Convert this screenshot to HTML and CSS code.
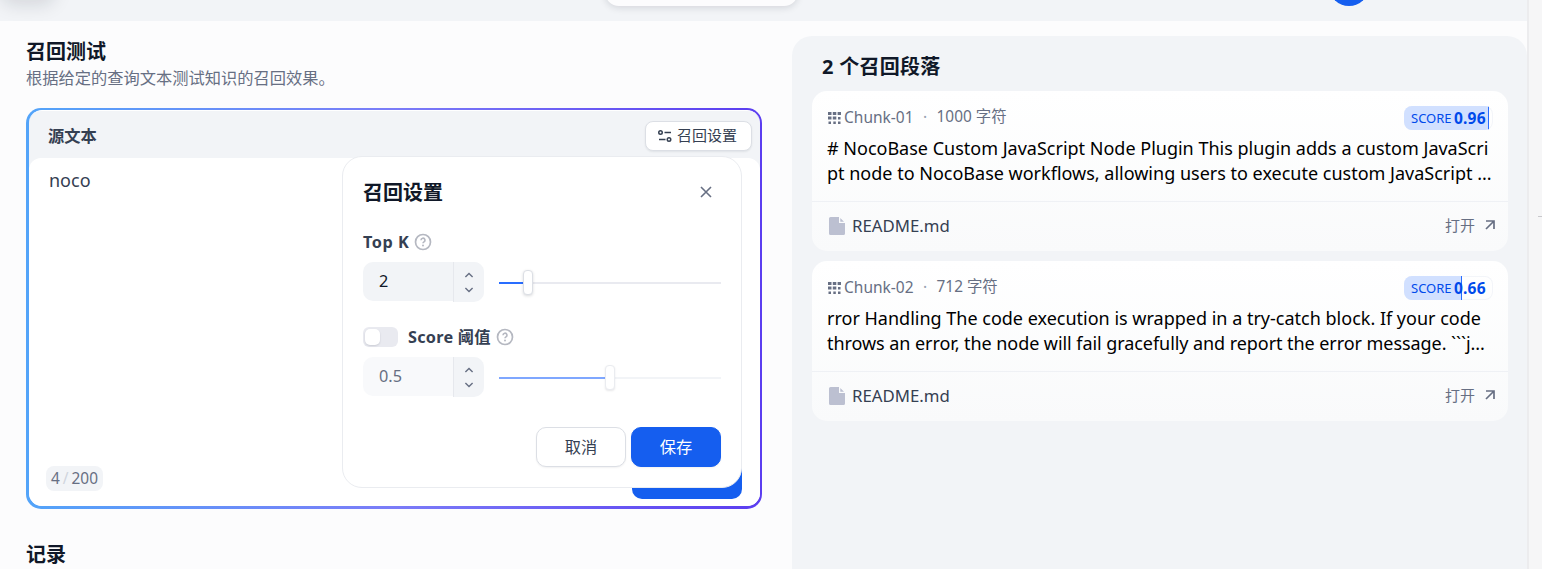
FILE: index.html
```html
<!DOCTYPE html>
<html lang="zh-CN">
<head>
<meta charset="utf-8">
<title>召回测试</title>
<link rel="stylesheet" href="styles.css">
</head>
<body>
<svg class="defs" width="0" height="0" aria-hidden="true">
  <symbol id="help" viewBox="0 0 18 18"><circle cx="9" cy="9" r="7.5" fill="none" stroke="currentColor" stroke-width="1.7"/><path d="M7 7.2a2 2 0 1 1 3 1.7c-.6.4-1 .7-1 1.4" fill="none" stroke="currentColor" stroke-width="1.6"/><circle cx="9" cy="12.5" r="1" fill="currentColor"/></symbol>
  <symbol id="up" viewBox="0 0 10 6"><path d="M1.4 5 5 1.4 8.6 5" fill="none" stroke="currentColor" stroke-width="1.4"/></symbol>
  <symbol id="down" viewBox="0 0 10 6"><path d="M1.4 1 5 4.6 8.6 1" fill="none" stroke="currentColor" stroke-width="1.4"/></symbol>
  <symbol id="grid" viewBox="0 0 13 12"><path d="M0 0h3.500v3H0zM4.800 0h3.500v3H4.800zM9.600 0H13v3H9.600zM0 4.600h3.500v3H0zM4.800 4.600h3.500v3H4.800zM10 5h2.500v2.500H10zM.5 9.500h2.500V12H.5zM5.300 9.500h2.500V12H5.300zM10 9.500h2.500V12H10z" fill="currentColor"/></symbol>
  <symbol id="file" viewBox="0 0 16 18"><path d="M1.500 0H10v6h6v10.500a1.500 1.500 0 0 1-1.500 1.500h-13A1.500 1.500 0 0 1 0 16.500v-15A1.500 1.500 0 0 1 1.500 0zM11.300 1l3.700 3.700h-3.700z" fill="currentColor"/></symbol>
  <symbol id="open" viewBox="0 0 10 10"><path d="M1 1h8v8M9 1 1 9" fill="none" stroke="currentColor" stroke-width="1.7"/></symbol>
</svg>
<div class="app">
  <div class="topbar"><i class="logo-glow"></i><i class="nav-pill"></i><i class="avatar"></i></div>
  <div class="main">
    <section class="left">
      <h1 class="title">召回测试</h1>
      <p class="desc">根据给定的查询文本测试知识的召回效果。</p>
      <div class="query">
        <div class="query-inner">
          <div class="query-head">
            <span class="query-label">源文本</span>
            <button class="settings-btn"><svg width="14" height="12" viewBox="0 0 14 12" fill="none" stroke="currentColor" stroke-width="1.5"><circle cx="2.5" cy="2.5" r="1.75"/><path d="M6.500 2.500H13M1 9.500h6.500"/><circle cx="11" cy="9.5" r="1.75"/></svg><span>召回设置</span></button>
          </div>
          <div class="query-body">
            <span class="query-text">noco</span>
            <div class="query-foot"><span class="counter">4<i>/</i>200</span><span class="submit"></span></div>
          </div>
        </div>
        <div class="modal">
          <div class="modal-head"><h2>召回设置</h2><svg class="close" width="12" height="12" viewBox="0 0 12 12"><path d="M1 1l10 10M11 1 1 11" stroke="currentColor" stroke-width="1.6"/></svg></div>
          <div class="field-label"><b class="topk">Top K</b><svg class="help"><use href="#help"/></svg></div>
          <div class="control"><div class="num"><span>2</span><div class="steps"><svg><use href="#up"/></svg><svg><use href="#down"/></svg></div></div><div class="slider"><i class="fill" style="width:29px"></i><i class="knob" style="left:24px"></i></div></div>
          <div class="field-label"><span class="switch"><i></i></span><b class="threshold">Score 阈值</b><svg class="help"><use href="#help"/></svg></div>
          <div class="control disabled"><div class="num"><span>0.5</span><div class="steps"><svg><use href="#up"/></svg><svg><use href="#down"/></svg></div></div><div class="slider"><i class="fill" style="width:111px"></i><i class="knob" style="left:106px"></i></div></div>
          <div class="actions"><button class="cancel">取消</button><button class="save">保存</button></div>
        </div>
      </div>
      <h1 class="title records">记录</h1>
    </section>
    <section class="right">
      <h2 class="hits">2 个召回段落</h2>
      <article class="card">
        <div class="card-body">
          <div class="meta"><svg><use href="#grid"/></svg><span class="chunk">Chunk-01</span><span class="dot">·</span><span class="chars">1000 字符</span><span class="score"><i style="width:85px"></i><span>SCORE</span><b>0.96</b></span></div>
          <p># NocoBase Custom JavaScript Node Plugin This plugin adds a custom JavaScri<br>pt node to NocoBase workflows, allowing users to execute custom JavaScript ...</p>
        </div>
        <div class="card-foot"><svg class="file"><use href="#file"/></svg><span class="name">README.md</span><span class="open">打开</span><svg class="arrow"><use href="#open"/></svg></div>
      </article>
      <article class="card">
        <div class="card-body">
          <div class="meta"><svg><use href="#grid"/></svg><span class="chunk">Chunk-02</span><span class="dot">·</span><span class="chars">712 字符</span><span class="score"><i style="width:58px"></i><span>SCORE</span><b>0.66</b></span></div>
          <p>rror Handling The code execution is wrapped in a try-catch block. If your code<br><span class="tight">throws an error, the node will fail gracefully and report the error message. ```j...</span></p>
        </div>
        <div class="card-foot"><svg class="file"><use href="#file"/></svg><span class="name">README.md</span><span class="open">打开</span><svg class="arrow"><use href="#open"/></svg></div>
      </article>
    </section>
  </div>
</div>
<aside class="gutter"><i></i></aside>
</body>
</html>
```
FILE: styles.css
```css
* { box-sizing: border-box; }
body { margin: 0; width: 1542px; height: 569px; overflow: hidden; display: flex; background: #fcfcfd; color: #101828; font-family: "Noto Sans", "Noto Sans CJK SC", sans-serif; font-size: 16.25px; }
h1, h2, p { margin: 0; }
i { font-style: normal; }
button { font: inherit; padding: 0; }
svg { display: block; flex: none; }
.defs { position: absolute; }
.app { width: 1527px; height: 569px; display: flex; flex-direction: column; }
.topbar { height: 21px; flex: none; background: #f2f4f7; position: relative; overflow: hidden; }
.topbar i { position: absolute; }
.logo-glow { left: 3px; top: -30px; width: 50px; height: 30px; border-radius: 10px; box-shadow: 0 3px 18px 2px rgba(16,24,40,.13); }
.nav-pill { left: 605px; top: -34px; width: 193px; height: 40px; border-radius: 14px; background: #fcfcfd; box-shadow: 0 2px 7px rgba(16,24,40,.13); }
.avatar { left: 1329px; top: -34px; width: 40px; height: 40px; border-radius: 50%; background: #155eef; }
.main { display: flex; flex: 1; min-height: 0; }
.left { width: 792px; padding: 16px 30px 0 26px; }
.title { font-size: 20px; line-height: 30px; font-weight: 700; }
.desc { line-height: 22px; height: 41px; color: #676f83; }
.query { width: 736px; height: 401px; border-radius: 15px; padding: 2px 2px 3px 3px; background: linear-gradient(90deg, #53a4f9, #7b7cf8 50%, #5b3df0); position: relative; }
.query-inner { height: 396px; border-radius: 13px; background: #f2f4f7; overflow: hidden; border-top: 1px solid #fff; }
.query-head { height: 47px; display: flex; align-items: center; justify-content: space-between; padding: 2px 8px 0 19px; }
.query-label { color: #354052; font-weight: 600; padding-bottom: 2px; }
.settings-btn { width: 107px; height: 30px; display: flex; align-items: center; gap: 5px; padding-left: 12px; background: #fff; border: 1px solid #dcdfe5; border-radius: 8px; box-shadow: 0 1px 2px rgba(16,24,40,.08); color: #354052; font-size: 15px; }
.settings-btn span { padding-bottom: 2px; }
.query-body { height: 348px; background: #fff; border-radius: 12px 12px 0 0; padding: 10px 18px 0 17px; display: flex; flex-direction: column; justify-content: space-between; }
.query-text { color: #354052; font-size: 18px; line-height: 25px; padding-left: 3px; }
.query-foot { display: flex; justify-content: space-between; align-items: flex-end; height: 50px; margin-bottom: 7px; }
.counter { height: 25px; line-height: 25px; border-radius: 8px; background: #f2f4f7; color: #676f83; font-size: 15.4px; padding: 0 5px; margin-bottom: 8px; }
.counter i { color: #d0d5dd; padding: 0 3px; }
.submit { width: 110px; height: 40px; border-radius: 10px; background: #155eef; }
.modal { position: absolute; left: 316px; top: 48px; width: 400px; height: 332px; background: #fff; border: 1px solid #eaecf0; border-radius: 20px; padding: 20px; }
.modal-head { height: 30px; display: flex; justify-content: space-between; align-items: center; padding-right: 9px; }
.modal-head h2 { font-size: 20px; line-height: 30px; padding-top: 2px; }
.close { color: #676f83; }
.field-label { margin-top: 23px; height: 24px; display: flex; align-items: center; color: #354052; }
.field-label b { font-weight: 700; font-size: 16.25px; line-height: 24px; }
.field-label .topk { letter-spacing: .55px; }
.field-label .threshold { letter-spacing: .25px; }
.help { width: 18px; height: 18px; margin-left: 5px; color: #b5b8c1; }
.control { margin-top: 8px; display: flex; height: 40px; gap: 15px; }
.num { width: 121px; height: 39px; display: flex; background: #f2f4f7; border-radius: 10px; color: #101828; }
.num > span { width: 90px; padding-left: 16px; line-height: 38px; }
.steps { width: 31px; height: 40px; background: #f2f4f7; border-left: 1px solid #e6e8ed; border-radius: 0 10px 10px 0; display: flex; flex-direction: column; align-items: center; justify-content: center; gap: 9px; color: #676f83; }
.steps svg { width: 10px; height: 6px; }
.slider { width: 222px; height: 40px; position: relative; display: flex; align-items: center; }
.slider::before { content: ""; width: 222px; height: 2px; margin-top: 2px; background: #e9eaf0; }
.fill { position: absolute; left: 0; top: 20px; height: 2px; background: #296dff; }
.knob { position: absolute; top: 8px; width: 10px; height: 25px; border-radius: 4px; background: #fff; border: 1px solid #dcdfe5; box-shadow: 0 1px 3px rgba(16,24,40,.16); }
.switch { width: 35px; height: 20px; border-radius: 6px; background: #e9eaf0; padding: 2px; margin-right: 10px; }
.switch i { display: block; width: 15px; height: 16px; border-radius: 5px; background: #fff; box-shadow: 0 1px 2px rgba(16,24,40,.14); }
.disabled .num { background: #f8f9fb; color: #676f83; }
.disabled .fill { background: #7fa7ff; }
.disabled .slider::before { background: #f2f4f7; }
.disabled .knob { border-color: #eaecf0; box-shadow: 0 1px 2px rgba(16,24,40,.1); }
.actions { display: flex; justify-content: flex-end; gap: 5px; margin-top: 30px; }
.actions button { width: 90px; height: 40px; padding-bottom: 2px; border-radius: 10px; border: 1px solid #dcdfe5; background: #fff; color: #354052; box-shadow: 0 1px 2px rgba(16,24,40,.06); }
.actions .save { background: #155eef; border-color: #155eef; color: #fff; }
.records { margin-top: 31px; }
.right { width: 735px; margin-top: 15px; padding: 16px 19px 0 20px; background: #f2f4f7; border-radius: 20px 20px 0 0; }
.hits { font-size: 20px; line-height: 30px; height: 39px; padding-left: 10px; letter-spacing: .25px; }
.card { height: 160px; margin-bottom: 10px; border-radius: 15px; background: linear-gradient(#fff, #f9fafb); }
.card-body { height: 111px; padding: 15px 15px 0; border-bottom: 1px solid #eff1f5; }
.meta { height: 24px; display: flex; align-items: center; color: #676f83; font-size: 15.5px; }
.meta > svg { width: 13px; height: 12px; margin-left: 1px; margin-right: 3px; }
.chunk, .dot { padding-bottom: 2px; }
.chars { font-size: 15.4px; padding-bottom: 5px; }
.dot { width: 23px; text-align: center; color: #98a2b2; }
.score { margin-left: auto; width: 89px; height: 24px; display: flex; align-items: center; position: relative; border-radius: 8px; overflow: hidden; color: #004aeb; padding-left: 7px; box-shadow: inset 0 0 0 1px #f3f5f9; }
.score i { position: absolute; left: 0; top: 0; bottom: 0; background: #d1e0ff; border-right: 1px solid #296dff; }
.score span, .score b { position: relative; padding-bottom: 1px; }
.score span { font-size: 13px; width: 43px; }
.score b { letter-spacing: .2px; }
.card p { color: #000; font-size: 18px; line-height: 25px; margin-top: 6px; white-space: nowrap; }
.tight { letter-spacing: -.065px; }
.card-foot { height: 47px; display: flex; align-items: center; padding: 0 13px 0 17px; color: #354052; }
.name { font-size: 16.8px; }
.file { width: 16px; height: 18px; color: #bcc0d1; margin-right: 7px; }
.open { margin-left: auto; font-size: 15px; color: #676f83; padding-bottom: 2px; }
.arrow { width: 10px; height: 10px; margin-left: 10px; margin-bottom: 1px; color: #676f83; }
.gutter { width: 15px; height: 569px; background: #f6f6f7; border-left: 2px solid #ececee; padding: 216px 0 0 9px; }
.gutter i { display: block; width: 5px; height: 1px; background: #c8c8cc; }
```
